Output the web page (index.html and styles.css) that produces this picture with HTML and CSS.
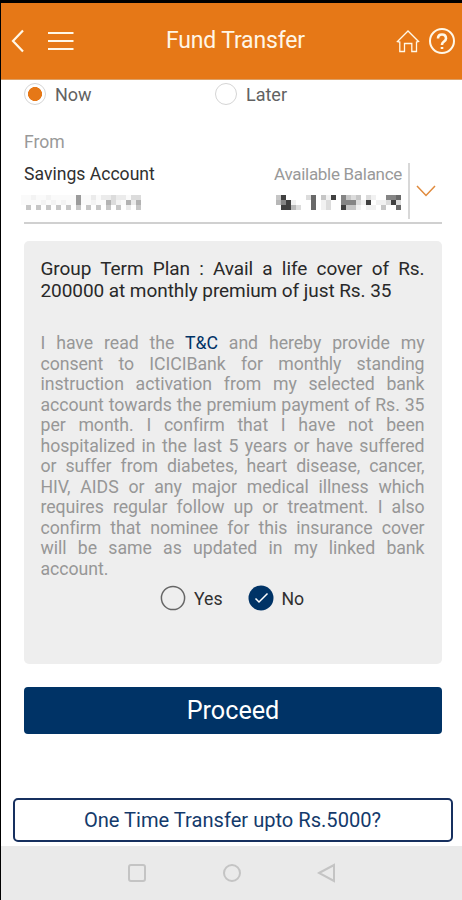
FILE: index.html
```html
<!DOCTYPE html>
<html lang="en">
<head>
<meta charset="utf-8">
<title>Fund Transfer</title>
<link rel="stylesheet" href="styles.css">
</head>
<body>
<div class="app">
  <header class="bar">
    <svg class="back" viewBox="0 0 14 24"><path d="M12 1.500 2 12 12 22.500"/></svg>
    <svg class="menu" viewBox="0 0 26 20"><path d="M0 2H25.500M0 10H25.500M0 18H25.500"/></svg>
    <h1>Fund Transfer</h1>
    <svg class="home" viewBox="0 0 24 24"><path d="M1.500 12.500 12 2 22.500 12.500L20.500 13V22.500H15.800V14.500H8.500V22.500H3.800V13Z"/></svg>
    <svg class="help" viewBox="0 0 28 28"><circle cx="14" cy="14" r="12"/><path class="q" d="M10 11.500Q10 7.500 14 7.500T18 11.500Q18 13 16 14.500T14 17.500V18M14 20V22"/></svg>
  </header>
  <main>
    <div class="when">
      <label class="opt"><i class="dot on"></i><span>Now</span></label>
      <label class="opt"><i class="dot"></i><span>Later</span></label>
    </div>
    <p class="from">From</p>
    <section class="account">
      <div class="info">
        <div class="names"><span class="acc">Savings Account</span><span class="bal">Available Balance</span></div>
        <div class="masks">
          <svg class="mask m1" viewBox="0 0 24 3" shape-rendering="crispEdges">
            <path fill="#fafafa" d="M0 0H24V2H0z"/>
            <path fill="#f3f3f3" d="M2 0h1v1h-1zM5 0h1v1h-1zM4 1h1v1h-1zM6 1h1v1h-1zM8 1h1v1h-1zM14 1h1v1h-1zM19 1h1v1h-1z"/>
            <path fill="#ebebeb" d="M14 0h1v1h-1zM16 0h2v1h-2zM19 0h2v1h-2zM22 1h1v1h-1zM21 2h1v1h-1z"/>
            <path fill="#dcdcdc" d="M18 0h1v1h-1zM22 0h2v1h-2zM18 1h1v1h-1z"/>
            <path fill="#c6c6c6" d="M1 2h1v1h-1zM3 2h1v1h-1zM5 2h1v1h-1zM7 2h1v1h-1zM9 2h1v1h-1zM11 2h1v1h-1zM13 2h1v1h-1zM15 2h1v1h-1zM17 2h1v1h-1zM19 2h1v1h-1zM23 2h1v1h-1z"/>
            <path fill="#b2b2b2" d="M17 1h1v1h-1zM21 1h1v1h-1zM23 1h1v1h-1z"/>
            <path fill="#9b9b9b" d="M11 0h1v2h-1z"/>
          </svg>
          <svg class="mask m2" viewBox="0 0 25 3" shape-rendering="crispEdges">
            <path fill="#f1f1f1" d="M10 0h1v1h-1zM19 0h1v1h-1zM3 1h1v1h-1zM9 1h1v2h-1zM17 1h1v1h-1zM20 1h1v1h-1zM16 2h1v1h-1zM18 2h2v1h-2zM21 1h1v1h-1z"/>
            <path fill="#dcdcdc" d="M6 0h1v1h-1zM15 0h1v1h-1zM18 0h1v1h-1zM10 1h1v2h-1zM16 1h1v1h-1zM22 1h1v1h-1zM24 1h1v1h-1zM4 2h1v1h-1z"/>
            <path fill="#b8b8b8" d="M0 1h1v1h-1zM3 2h1v1h-1z"/>
            <path fill="#c6c6c6" d="M0 0h1v1h-1zM9 0h1v1h-1zM14 0h1v1h-1zM16 0h1v1h-1zM14 2h2v1h-2zM21 2h1v1h-1z"/>
            <path fill="#858585" d="M13 0h1v2h-1zM14 1h2v1h-2zM22 0h2v1h-2zM1 1h1v1h-1z"/>
            <path fill="#696969" d="M7 0h1v3h-1zM24 0h1v1h-1zM24 2h1v1h-1z"/>
            <path fill="#404040" d="M1 0h1v1h-1zM2 1h1v1h-1zM1 2h2v1h-2zM11 0h1v1h-1zM13 2h1v1h-1zM18 1h1v1h-1zM23 1h1v1h-1z"/>
          </svg>
        </div>
      </div>
      <div class="pick"><svg viewBox="0 0 20 12"><path d="M1 1 10 10.500 19 1"/></svg></div>
    </section>
    <section class="card">
      <h2>Group Term Plan : Avail a life cover of Rs. 200000 at monthly premium of just Rs. 35</h2>
      <p class="terms">I have read the <b>T&amp;C</b> and hereby provide my consent to ICICIBank for monthly standing instruction activation from my selected bank account towards the premium payment of Rs. 35 per month. I confirm that I have not been hospitalized in the last 5 years or have suffered or suffer from diabetes, heart disease, cancer, HIV, AIDS or any major medical illness which requires regular follow up or treatment. I also confirm that nominee for this insurance cover <span class="keep">will be</span> same as updated in my linked <span class="keep">bank</span> <span class="last">account.</span></p>
      <div class="consent">
        <svg viewBox="0 0 26 26"><circle class="ring" cx="13" cy="13" r="11.600"/></svg><span class="yes">Yes</span>
        <svg viewBox="0 0 26 26"><circle class="fill" cx="13" cy="13" r="12.500"/><path class="tick" d="M7.500 13.500 11 17 19.500 8.500"/></svg><span>No</span>
      </div>
    </section>
    <button class="proceed">Proceed</button>
  </main>
  <button class="once">One Time Transfer upto Rs.5000?</button>
  <nav>
    <svg viewBox="0 0 20 20"><rect x="2" y="2" width="16" height="16" rx="2"/></svg>
    <svg viewBox="0 0 20 20"><circle cx="10" cy="10" r="8"/></svg>
    <svg viewBox="0 0 20 20"><path d="M2 10 17 2V18Z"/></svg>
  </nav>
</div>
</body>
</html>
```
FILE: styles.css
```css
* { box-sizing: border-box; margin: 0; padding: 0; }
body { font-family: Roboto, sans-serif; background: #fff; }
svg { fill: none; display: block; flex: none; }
.app { width: 462px; height: 900px; border-left: 1px solid #000; border-top: 3px solid #000; display: flex; flex-direction: column; overflow: hidden; }
.bar { height: 77px; background: #e67817; border-bottom: 1px solid #dda066; display: flex; align-items: center; padding-left: 10px; flex: none; }
.bar svg { stroke: #fff8e8; }
.back { width: 14px; height: 24px; stroke-width: 2.2; }
.menu { width: 26px; height: 20px; stroke-width: 2; margin-left: 23px; }
h1 { font-size: 23px; letter-spacing: -0.170px; font-weight: 400; color: #fff6e6; line-height: 28px; margin-left: 92px; width: 139px; white-space: nowrap; }
.home { width: 24px; height: 24px; stroke-width: 1.3; margin-left: 91px; }
.help { width: 28px; height: 28px; stroke-width: 2; margin-left: 8px; }
.help .q { stroke-width: 2.6; }
main { padding: 0 20px 0 23px; }
.when { display: flex; height: 31px; padding-top: 3px; }
.opt { display: flex; width: 191px; align-items: flex-start; font-size: 18px; line-height: 23px; color: #626262; gap: 9px; }
.dot { width: 22px; height: 22px; border: 1px solid #d5d5d5; border-radius: 50%; flex: none; }
.dot.on { background: radial-gradient(circle, #e67817 6.700px, #fff 7.300px); }
.from { font-size: 17.600px; line-height: 22px; margin-top: 20px; color: #999; }
.account { display: flex; height: 61px; border-bottom: 2px solid #d0d0d0; margin-top: 10px; }
.info { width: 378px; }
.names { display: flex; justify-content: space-between; line-height: 23px; font-size: 17.600px; }
.acc { color: #303030; }
.bal { color: #999; font-size: 17px; letter-spacing: -0.300px; }
.masks { display: flex; justify-content: space-between; margin: 9px 1px 0 -3px; }
.mask { height: 15px; }
.m1 { width: 120px; }
.m2 { width: 125px; }
.pick { border-left: 2px solid #d8d8d8; height: 56px; padding: 22px 0 0 6px; margin-left: 6px; }
.pick svg { width: 20px; height: 12px; stroke: #e08a3c; stroke-width: 1.500; }
.card { height: 423px; margin-top: 17px; background: #eee; border-radius: 5px; padding: 17px 17.500px 0 16.500px; }
h2 { font-size: 19px; letter-spacing: -0.070px; font-weight: 400; line-height: 22px; text-align: justify; color: #292929; }
.terms { margin-top: 31px; font-size: 17.700px; letter-spacing: -0.050px; line-height: 20.550px; text-align: justify; color: #979797; }
.terms b { font-weight: 400; color: #036; }
.keep { white-space: nowrap; }
.consent { display: flex; align-items: center; margin: 5px 0 0 119.500px; font-size: 17.700px; color: #303030; }
.consent svg { width: 26px; height: 26px; }
.consent span { margin-left: 8px; padding-top: 2px; }
.yes { width: 53.500px; }
.ring { stroke: #666; stroke-width: 1.500; }
.fill { fill: #036; }
.tick { stroke: #fff; stroke-width: 1.500; }
button { font-family: inherit; display: block; }
.proceed { width: 418px; height: 47px; margin-top: 22.500px; border: 0; border-radius: 4px; background: #036; color: #fff; font-size: 25.200px; }
.once { width: 440px; height: 44px; margin: 64px 0 0 11.500px; border: 2px solid #17305f; border-radius: 5px; background: #fff; color: #143a6b; font-size: 20.100px; flex: none; }
nav { height: 54px; margin-top: auto; background: #eaeaea; display: flex; padding: 17px 0 0 126px; gap: 75px; flex: none; }
nav svg { width: 20px; height: 20px; stroke: #c4c4c4; stroke-width: 2; }
```
